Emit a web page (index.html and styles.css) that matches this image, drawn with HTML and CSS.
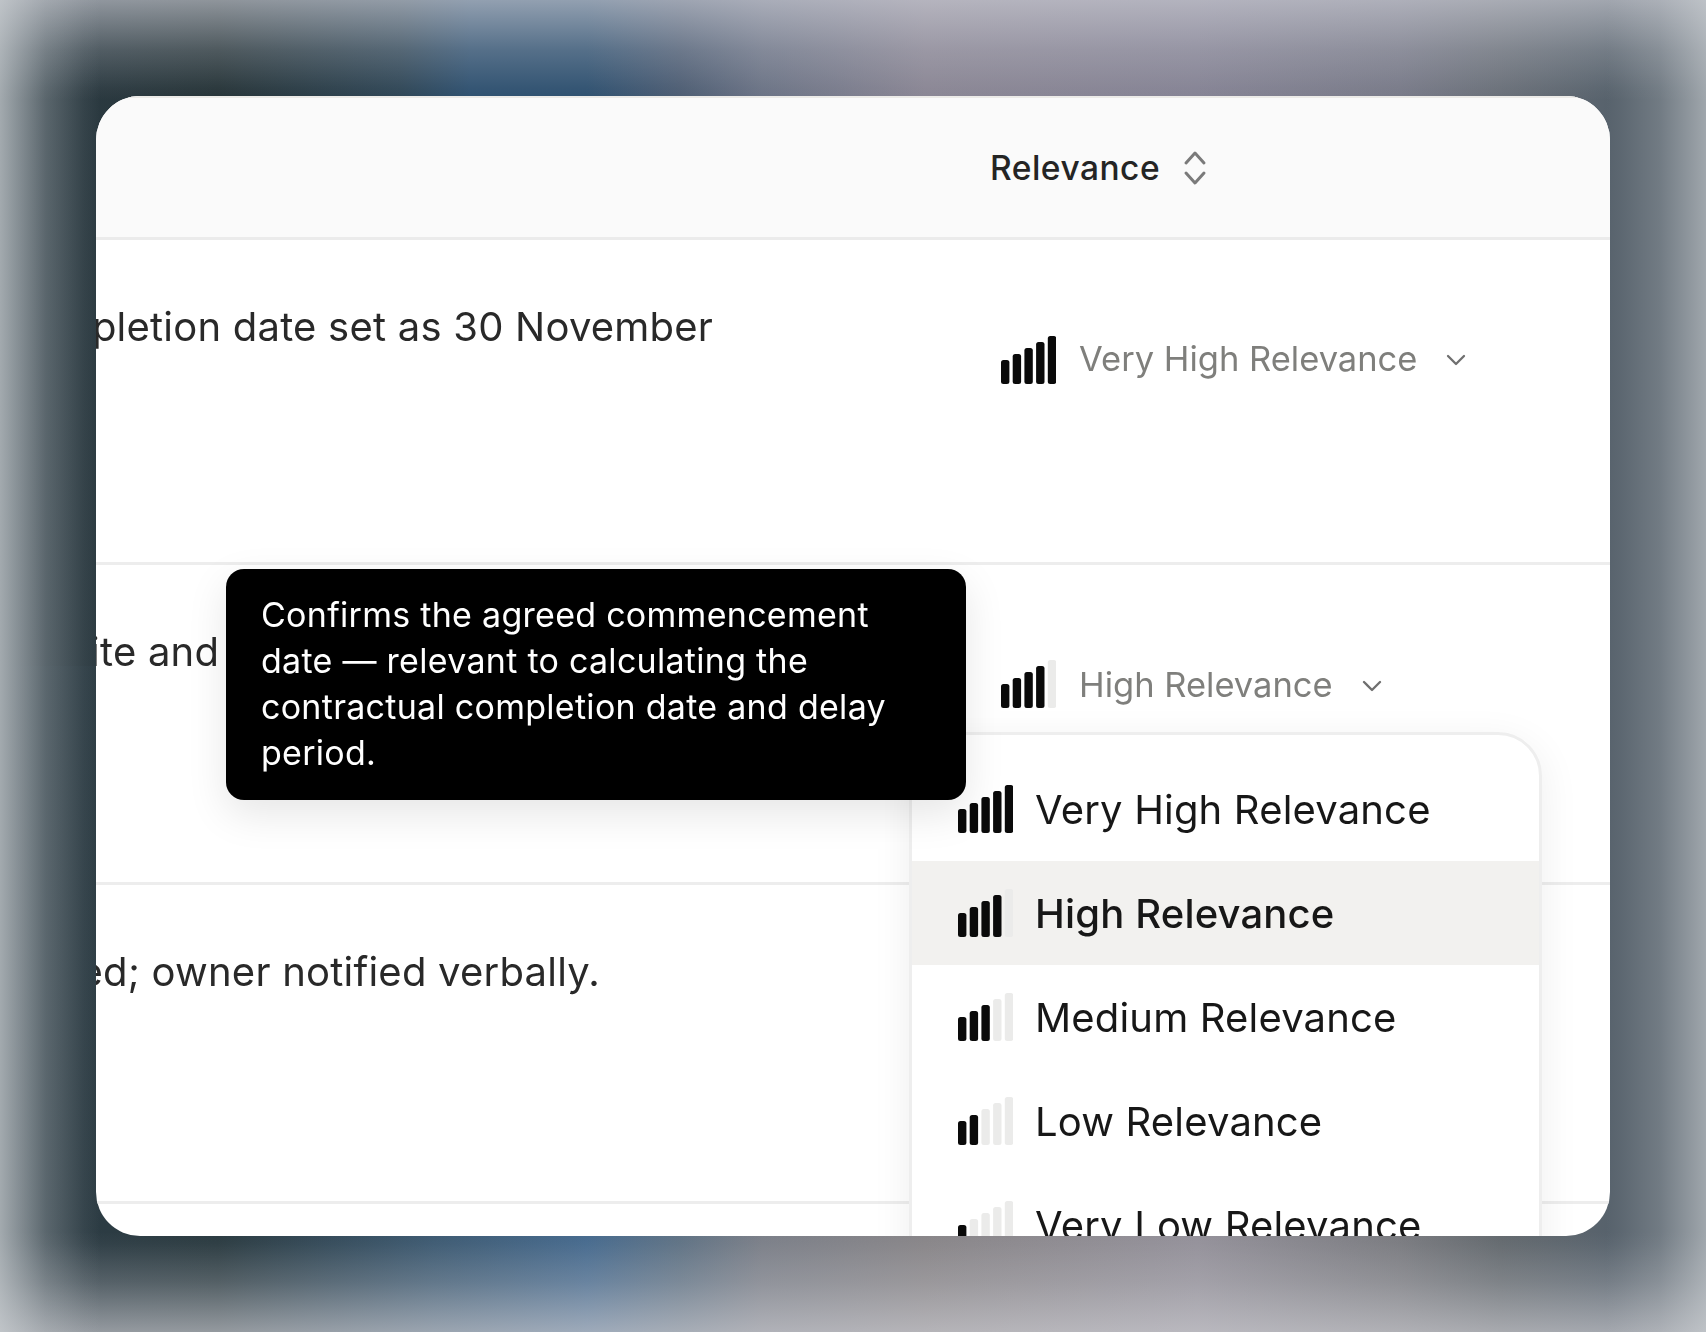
FILE: index.html
```html
<!DOCTYPE html>
<html lang="en">
<head>
<meta charset="utf-8">
<title>Relevance</title>
<link rel="stylesheet" href="styles.css">
</head>
<body>
<main class="card">
  <header class="head">
    <span class="head-label">Relevance</span>
    <svg class="sort" viewBox="0 0 24 36" fill="none"><path d="M3 13 12 3l9 10M3 23l9 10 9-10"/></svg>
  </header>
  <section class="row row-a">
    <p class="copy copy-a">Completion date set as 30 November</p>
    <div class="select select-a">
      <svg class="bars" viewBox="0 0 55 48"><rect class="on" y="24" width="8" height="24" rx="2.5"/><rect class="on" x="11.7" y="18" width="8" height="30" rx="2.5"/><rect class="on" x="23.4" y="12" width="8" height="36" rx="2.5"/><rect class="on" x="35.1" y="6" width="8" height="42" rx="2.5"/><rect class="on" x="46.8" width="8" height="48" rx="2.5"/></svg>
      <span class="select-label">Very High Relevance</span>
      <svg class="chev" viewBox="0 0 22 14" fill="none"><path d="M3 3 11 11 19 3"/></svg>
    </div>
  </section>
  <section class="row row-b">
    <p class="copy copy-b">Possession of site and</p>
    <div class="select select-b">
      <svg class="bars" viewBox="0 0 55 48"><rect class="on" y="24" width="8" height="24" rx="2.5"/><rect class="on" x="11.7" y="18" width="8" height="30" rx="2.5"/><rect class="on" x="23.4" y="12" width="8" height="36" rx="2.5"/><rect class="on" x="35.1" y="6" width="8" height="42" rx="2.5"/><rect class="off" x="46.8" width="8" height="48" rx="2.5"/></svg>
      <span class="select-label">High Relevance</span>
      <svg class="chev" viewBox="0 0 22 14" fill="none"><path d="M3 3 11 11 19 3"/></svg>
    </div>
    <div class="tooltip">Confirms the agreed commencement date — relevant to calculating the contractual completion date and delay period.</div>
    <ul class="menu">
      <li class="option">
        <svg class="bars" viewBox="0 0 55 48"><rect class="on" y="24" width="8" height="24" rx="2.5"/><rect class="on" x="11.7" y="18" width="8" height="30" rx="2.5"/><rect class="on" x="23.4" y="12" width="8" height="36" rx="2.5"/><rect class="on" x="35.1" y="6" width="8" height="42" rx="2.5"/><rect class="on" x="46.8" width="8" height="48" rx="2.5"/></svg>
        <span>Very High Relevance</span>
      </li>
      <li class="option option-hover">
        <svg class="bars" viewBox="0 0 55 48"><rect class="on" y="24" width="8" height="24" rx="2.5"/><rect class="on" x="11.7" y="18" width="8" height="30" rx="2.5"/><rect class="on" x="23.4" y="12" width="8" height="36" rx="2.5"/><rect class="on" x="35.1" y="6" width="8" height="42" rx="2.5"/><rect class="off" x="46.8" width="8" height="48" rx="2.5"/></svg>
        <span>High Relevance</span>
      </li>
      <li class="option">
        <svg class="bars" viewBox="0 0 55 48"><rect class="on" y="24" width="8" height="24" rx="2.5"/><rect class="on" x="11.7" y="18" width="8" height="30" rx="2.5"/><rect class="on" x="23.4" y="12" width="8" height="36" rx="2.5"/><rect class="off" x="35.1" y="6" width="8" height="42" rx="2.5"/><rect class="off" x="46.8" width="8" height="48" rx="2.5"/></svg>
        <span>Medium Relevance</span>
      </li>
      <li class="option">
        <svg class="bars" viewBox="0 0 55 48"><rect class="on" y="24" width="8" height="24" rx="2.5"/><rect class="on" x="11.7" y="18" width="8" height="30" rx="2.5"/><rect class="off" x="23.4" y="12" width="8" height="36" rx="2.5"/><rect class="off" x="35.1" y="6" width="8" height="42" rx="2.5"/><rect class="off" x="46.8" width="8" height="48" rx="2.5"/></svg>
        <span>Low Relevance</span>
      </li>
      <li class="option">
        <svg class="bars" viewBox="0 0 55 48"><rect class="on" y="24" width="8" height="24" rx="2.5"/><rect class="off" x="11.7" y="18" width="8" height="30" rx="2.5"/><rect class="off" x="23.4" y="12" width="8" height="36" rx="2.5"/><rect class="off" x="35.1" y="6" width="8" height="42" rx="2.5"/><rect class="off" x="46.8" width="8" height="48" rx="2.5"/></svg>
        <span>Very Low Relevance</span>
      </li>
    </ul>
  </section>
  <section class="row row-c">
    <p class="copy copy-c">Delay recorded; owner notified verbally.</p>
  </section>
  <section class="row row-d"></section>
</main>
</body>
</html>
```
FILE: styles.css
```css
* { box-sizing: border-box; }
html, body { height: 100%; }
body {
  margin: 0;
  padding: 96px;
  overflow: hidden;
  font-family: Inter, "Liberation Sans", sans-serif;
  background-color: #57626c;
  background-repeat: no-repeat;
  background-image:
    linear-gradient(to right, rgba(208, 212, 215, .72), rgba(208, 212, 215, .28) 46px, rgba(208, 212, 215, .06) 84px, rgba(208, 212, 215, 0) 100px),
    linear-gradient(to left, rgba(208, 212, 215, .6), rgba(208, 212, 215, .22) 46px, rgba(208, 212, 215, .05) 84px, rgba(208, 212, 215, 0) 100px),
    linear-gradient(to bottom, rgba(207, 208, 216, .62), rgba(207, 208, 216, .24) 50px, rgba(207, 208, 216, .04) 88px, rgba(207, 208, 216, 0) 100px),
    linear-gradient(to top, rgba(205, 205, 210, .65), rgba(205, 205, 210, .26) 50px, rgba(205, 205, 210, .04) 88px, rgba(205, 205, 210, 0) 100px),
    linear-gradient(to right, #2e3d46 0, #263438 218px, #2f4656 400px, #2f5170 470px, #2f5170 587px, #4d5d73 680px, #6b7385 762px, #8a8694 925px, #858394 1197px, #787a88 1400px, #6a7079 1500px, #57626c 1610px),
    linear-gradient(to right, #2e3d46 0, #2a3a40 218px, #3d5a72 435px, #466a8e 587px, #5f7284 680px, #7b7f88 762px, #888588 925px, #94919a 1197px, #7a7b80 1400px, #63696e 1500px, #57626c 1610px);
  background-size: 100% 100%, 100% 100%, 100% 100%, 100% 100%, 100% 50%, 100% 50%;
  background-position: 0 0, 0 0, 0 0, 0 0, 0 0, 0 100%;
}
.card {
  position: relative;
  height: 1140px;
  border-radius: 44px;
  overflow: hidden;
  background: #fff;
  filter: blur(.4px);
}
.head {
  height: 144px;
  padding-left: 894px;
  display: flex;
  align-items: center;
  gap: 23px;
  background: #fafafa;
  border-top: 2px solid #ecebe8;
  border-bottom: 3px solid #ebebeb;
}
.head-label { font-size: 33.5px; font-weight: 500; color: #242424; letter-spacing: .5px; }
.sort { width: 24px; height: 36px; }
.sort path { stroke: #7a7a7a; stroke-width: 3; stroke-linecap: round; stroke-linejoin: round; }
.row {
  position: relative;
  border-bottom: 3px solid #ededed;
}
.row-a { height: 325px; }
.row-b { height: 320px; }
.row-c { height: 319px; }
.row-d { height: 40px; border: 0; }
.copy {
  margin: 0;
  font-size: 40px;
  letter-spacing: .22px;
  line-height: 48px;
  color: #292929;
  white-space: nowrap;
}
.copy-a { padding: 63px 0 0; margin-left: -93px; }
.copy-b { padding: 63px 0 0; margin-left: -306px; }
.copy-c { padding: 63px 0 0; margin-left: -260px; }
.select {
  position: absolute;
  left: 905px;
  display: flex;
  align-items: center;
  gap: 23px;
}
.select-a { top: 96px; }
.select-b { top: 95px; }
.select-b .bars { margin-bottom: 4px; }
.select-label { font-size: 34.5px; color: #7f7f7c; margin-bottom: 4px; }
.bars { width: 55px; height: 48px; flex: none; }
.bars rect { width: 8.4px; }
.bars .on { fill: #0a0a0a; }
.bars .off { fill: #ebebea; }
.chev { width: 22px; height: 14px; margin-left: 5px; }
.chev path { stroke: #6f6f6f; stroke-width: 2.3; stroke-linecap: round; stroke-linejoin: round; }
.tooltip {
  position: absolute;
  z-index: 3;
  left: 130px;
  top: 4px;
  width: 740px;
  height: 231px;
  padding: 23px 35px;
  border-radius: 18px;
  background: #000;
  color: #fff;
  font-size: 34px;
  letter-spacing: .28px;
  line-height: 46px;
  box-shadow: 0 14px 40px rgba(0, 0, 0, .1);
}
.menu {
  position: absolute;
  z-index: 2;
  left: 813px;
  top: 167px;
  width: 633px;
  margin: 0;
  padding: 22px 0;
  list-style: none;
  background: #fff;
  border: 3px solid #eeeeee;
  border-radius: 44px;
  box-shadow: 0 10px 40px rgba(0, 0, 0, .07);
}
.option {
  height: 104px;
  padding-left: 46px;
  display: flex;
  align-items: center;
  gap: 22px;
  font-size: 40px;
  letter-spacing: .17px;
  color: #171717;
}
.option-hover { background: #f2f1ef; font-weight: 500; }
```
